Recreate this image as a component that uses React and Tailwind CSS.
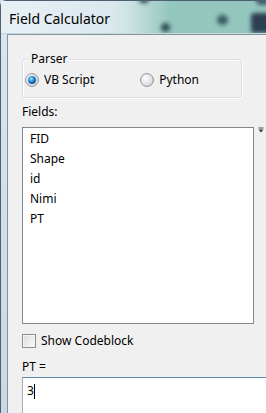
import React from "react";

const font = { fontFamily: '"Noto Sans", "Open Sans", Arial, sans-serif' };

function Radio({ checked }) {
  return (
    <svg width="14" height="14" viewBox="0 0 14 14" className="shrink-0">
      <defs>
        <radialGradient id="rbg" cx="0.35" cy="0.35" r="0.8">
          <stop offset="0" stopColor="#fdfdfd" />
          <stop offset="1" stopColor="#cfd3d8" />
        </radialGradient>
        <radialGradient id="rdot" cx="0.4" cy="0.35" r="0.7">
          <stop offset="0" stopColor="#9fe3ff" />
          <stop offset="0.5" stopColor="#2a8ad4" />
          <stop offset="1" stopColor="#0c3f73" />
        </radialGradient>
      </defs>
      <circle cx="7" cy="7" r="6.4" fill="url(#rbg)" stroke="#8b9096" strokeWidth="1" />
      {checked && <circle cx="7" cy="7" r="4" fill="url(#rdot)" />}
    </svg>
  );
}

export default function App() {
  return (
    <div
      className="relative w-[266px] h-[413px] overflow-hidden bg-[#d2dfea] text-[12px] text-black"
      style={font}
    >
      {/* window frame */}
      <div className="flex flex-col h-full rounded-tl-[6px] border-l border-t border-[#4e5f70] bg-gradient-to-b from-[#dbe6ef] to-[#c9d8e5]">
        {/* title bar */}
        <div className="relative h-[33px] shrink-0 overflow-hidden bg-gradient-to-r from-[#e8f0f6] via-[#dbe9ee] via-40% to-[#8fc2b9]">
          <div className="absolute left-[150px] top-0 w-[120px] h-[33px] bg-[#93c6bd]" />
          <div className="absolute left-[120px] top-0 w-[50px] h-[33px] bg-gradient-to-r from-[#d6e8ea] to-[#93c6bd]" />
          <div className="absolute left-[138px] top-[-6px] w-[10px] h-[8px] rounded-full bg-[#2d4a55] blur-[2px]" />
          <div className="absolute left-[160px] top-[22px] w-[9px] h-[9px] rounded-full bg-[#2f4d55] blur-[2px]" />
          <div className="absolute left-[216px] top-[14px] w-[11px] h-[10px] rounded-full bg-[#3a5a62] blur-[2px]" />
          <div className="absolute left-[250px] top-[12px] w-[20px] h-[20px] rounded-[3px] bg-[#2c3f52] blur-[2px]" />
          <div className="absolute left-[255px] top-[-6px] w-[14px] h-[10px] rounded-full bg-[#3b5a66] blur-[2px]" />
          <div className="absolute left-0 right-0 bottom-0 h-[1px] bg-[#c8d6de]" />
          <div className="relative pl-[8px] pt-[8px] text-[14px] leading-[20px] text-black">
            Field Calculator
          </div>
        </div>
        {/* client area */}
        <div className="flex-1 ml-[6px] border-l border-t border-[#8593a0] bg-[#f0f0f0] overflow-hidden">
          <div className="pl-[14px] pt-[24px]">
            {/* group box */}
            <div className="relative w-[220px] h-[39px] rounded-[3px] border border-[#d5dfe5] shadow-[inset_1px_1px_0_#ffffff,1px_1px_0_#ffffff]">
              <div className="absolute left-[6px] top-[-9px] bg-[#f0f0f0] px-[2px] leading-[16px]">
                Parser
              </div>
              <div className="flex items-center pt-[12px] pl-[2px] leading-[16px]">
                <Radio checked />
                <span className="ml-[5px]">VB Script</span>
                <div className="ml-[46px] flex items-center">
                  <Radio />
                  <span className="ml-[5px]">Python</span>
                </div>
              </div>
            </div>
            <div className="mt-[6px] leading-[16px]">Fields:</div>
            {/* list box */}
            <div className="relative mt-[7px]">
              <div className="w-[232px] h-[197px] border border-[#828790] bg-white pt-[1px] pl-[7px]">
                {["FID", "Shape", "id", "Nimi", "PT"].map((f) => (
                  <div key={f} className="h-[20px] leading-[20px]">
                    {f}
                  </div>
                ))}
              </div>
              <svg
                className="absolute left-[236px] top-[0px]"
                width="6"
                height="6"
                viewBox="0 0 6 6"
              >
                <rect x="0.5" y="0.5" width="5" height="1" fill="#4a4a4a" />
                <path d="M0.5 2.5 L5.5 2.5 L3 5.5 Z" fill="#3a3a3a" />
              </svg>
            </div>
            {/* checkbox */}
            <div className="mt-[9px] flex items-center leading-[16px]">
              <div className="w-[14px] h-[14px] border border-[#8e8f8f] bg-gradient-to-br from-[#dcdcdc] to-[#fbfbfb] shadow-[inset_0_0_0_1px_#f4f4f4]" />
              <span className="ml-[5px]">Show Codeblock</span>
            </div>
            <div className="mt-[10px] leading-[16px]">PT =</div>
            {/* text box */}
            <div className="mt-[2px] w-[280px] h-[60px] border border-[#abadb3] border-t-[#5b89b0] bg-white pl-[4px] pt-[5px] leading-[16px]">
              <span>3</span>
              <span className="inline-block align-middle w-[1px] h-[15px] bg-black" />
            </div>
          </div>
        </div>
      </div>
    </div>
  );
}
